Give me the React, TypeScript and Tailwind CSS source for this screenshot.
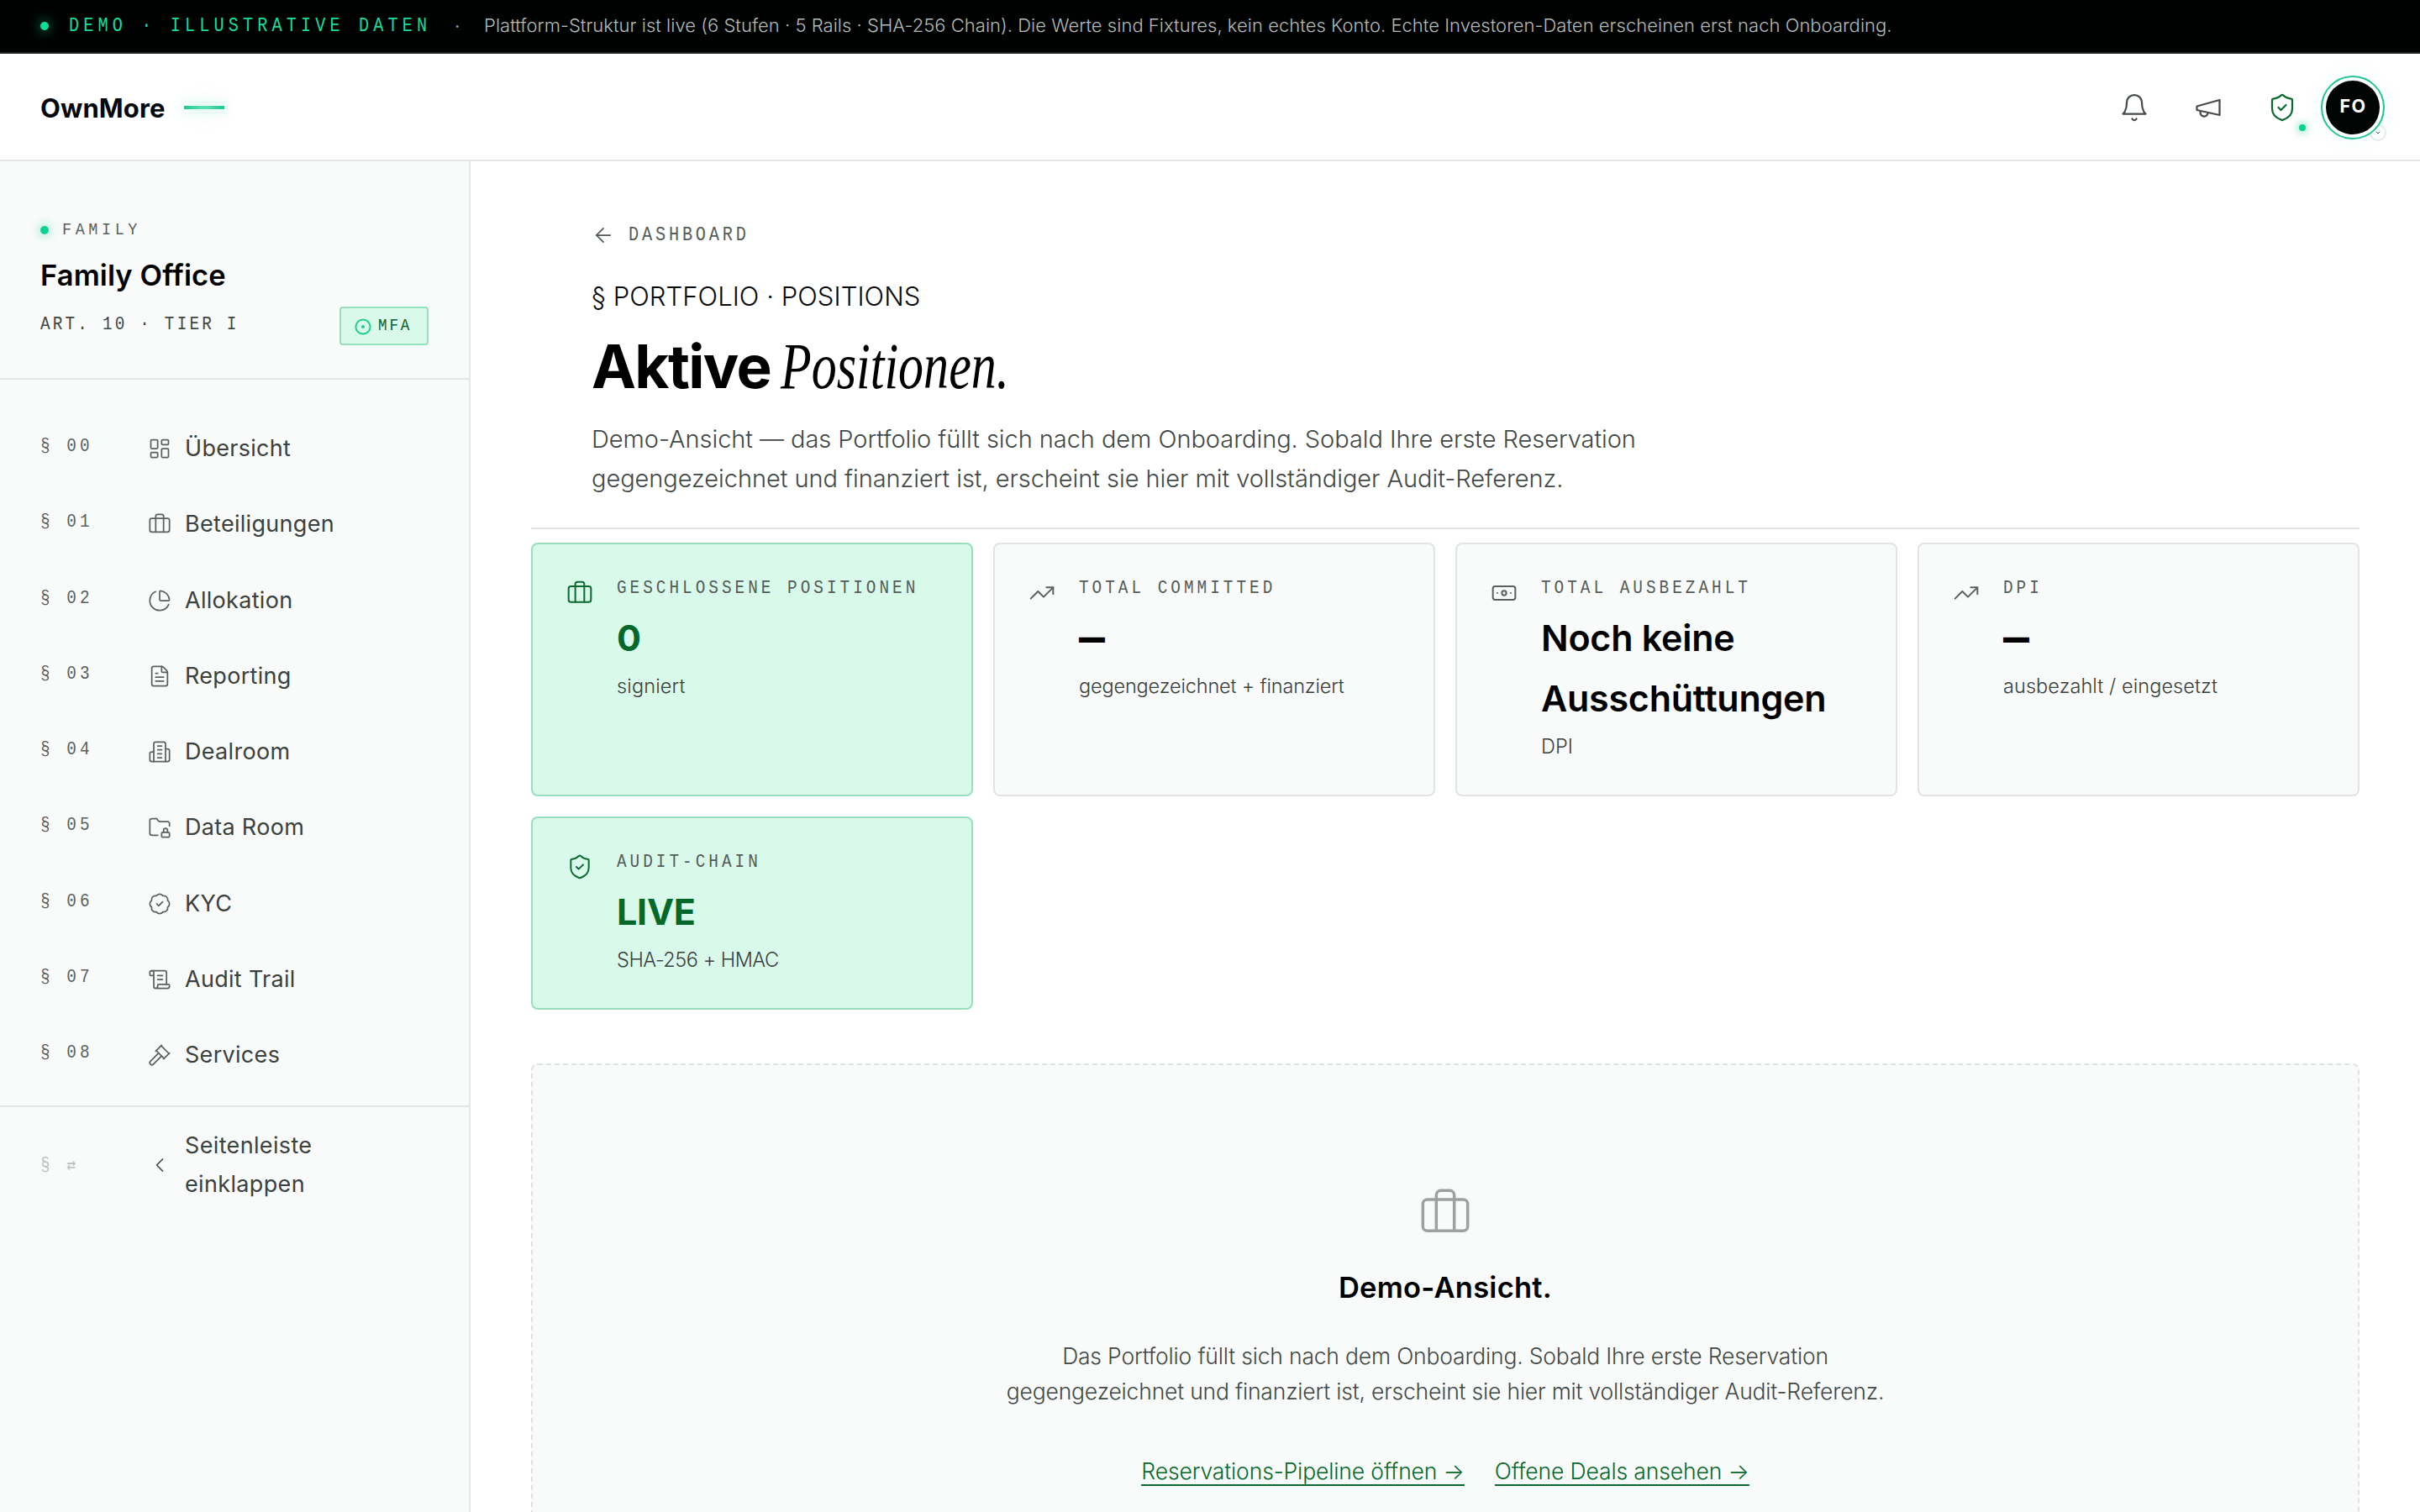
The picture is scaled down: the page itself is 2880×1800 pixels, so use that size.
import React from 'react';
import {
  ArrowLeft,
  BadgeCheck,
  Banknote,
  ChartPie,
  ChevronDown,
  ChevronLeft,
  FileText,
  FolderLock,
  Gavel,
  LayoutDashboard,
  ScrollText,
  ShieldCheck,
  TrendingUp,
} from 'lucide-react';

type IconProps = { className?: string; strokeWidth?: number };
type IconType = React.ComponentType<IconProps>;

function Glyph({ className, strokeWidth = 1.5, children }: IconProps & { children: React.ReactNode }) {
  return (
    <svg
      viewBox="0 0 24 24"
      fill="none"
      stroke="currentColor"
      strokeWidth={strokeWidth}
      strokeLinecap="round"
      strokeLinejoin="round"
      className={className}
    >
      {children}
    </svg>
  );
}

const BellIcon = (p: IconProps) => (
  <Glyph {...p}>
    <path d="M6 8a6 6 0 0 1 12 0c0 7 3 9 3 9H3s3-2 3-9" />
    <path d="M10.3 21a1.94 1.94 0 0 0 3.4 0" />
  </Glyph>
);

const MegaphoneIcon = (p: IconProps) => (
  <Glyph {...p}>
    <path d="m3 11 18-5v12L3 14v-3z" />
    <path d="M11.6 16.8a3 3 0 1 1-5.8-1.6" />
  </Glyph>
);

const BriefcaseIcon = (p: IconProps) => (
  <Glyph {...p}>
    <path d="M16 20V4a2 2 0 0 0-2-2h-4a2 2 0 0 0-2 2v16" />
    <rect width="20" height="14" x="2" y="6" rx="2" />
  </Glyph>
);

const BuildingIcon = (p: IconProps) => (
  <Glyph {...p}>
    <path d="M6 22V4a2 2 0 0 1 2-2h8a2 2 0 0 1 2 2v18Z" />
    <path d="M6 12H4a2 2 0 0 0-2 2v6a2 2 0 0 0 2 2h2" />
    <path d="M18 9h2a2 2 0 0 1 2 2v9a2 2 0 0 1-2 2h-2" />
    <path d="M10 6h4M10 10h4M10 14h4M10 18h4" />
  </Glyph>
);

/** Condensed monospace used for section numbers and small caps labels. */
function Mono({ className, children }: { className: string; children: React.ReactNode }) {
  return (
    <span
      className={`block origin-left scale-x-[0.88] font-['Liberation_Mono',monospace] whitespace-nowrap ${className}`}
    >
      {children}
    </span>
  );
}

const NAV: { no: string; label: string; icon: IconType }[] = [
  { no: '§ 00', label: 'Übersicht', icon: LayoutDashboard },
  { no: '§ 01', label: 'Beteiligungen', icon: BriefcaseIcon },
  { no: '§ 02', label: 'Allokation', icon: ChartPie },
  { no: '§ 03', label: 'Reporting', icon: FileText },
  { no: '§ 04', label: 'Dealroom', icon: BuildingIcon },
  { no: '§ 05', label: 'Data Room', icon: FolderLock },
  { no: '§ 06', label: 'KYC', icon: BadgeCheck },
  { no: '§ 07', label: 'Audit Trail', icon: ScrollText },
  { no: '§ 08', label: 'Services', icon: Gavel },
];

type Stat = { label: string; value: React.ReactNode; sub: string; subClass: string; icon: IconType; active?: boolean };

const EmptyValue = <span className="inline-block origin-left -translate-y-px scale-x-[0.72] scale-y-125 font-bold">—</span>;

const STATS: Stat[] = [
  { label: 'GESCHLOSSENE POSITIONEN', value: '0', sub: 'signiert', subClass: 'tracking-[0.15px]', icon: BriefcaseIcon, active: true },
  { label: 'TOTAL COMMITTED', value: EmptyValue, sub: 'gegengezeichnet + finanziert', subClass: 'tracking-[-0.16px]', icon: TrendingUp },
  { label: 'TOTAL AUSBEZAHLT', value: 'Noch keine Ausschüttungen', sub: 'DPI', subClass: 'tracking-normal', icon: Banknote },
  { label: 'DPI', value: EmptyValue, sub: 'ausbezahlt / eingesetzt', subClass: 'tracking-[0.07px]', icon: TrendingUp },
  { label: 'AUDIT-CHAIN', value: 'LIVE', sub: 'SHA-256 + HMAC', subClass: 'tracking-[-0.45px]', icon: ShieldCheck, active: true },
];

function Banner() {
  return (
    <div className="flex h-16 shrink-0 items-center border-b-2 border-[#222725] bg-[#000201] pl-12">
      <span className="size-[10px] rounded-full bg-[#10dc9a] shadow-[0_0_14px_2px_rgba(16,220,154,0.45)]" />
      <Mono className="-mr-[60px] ml-6 text-[23px] leading-none tracking-[5.8px] text-[#16dc9d]">
        DEMO · ILLUSTRATIVE DATEN
      </Mono>
      <span className="w-16 text-center text-[22px] leading-none text-[#8f9794]">·</span>
      <span className="pb-[2px] text-[22px] leading-none font-light tracking-[0.03px] text-[#b4bab7]">
        Plattform-Struktur ist live (6 Stufen · 5 Rails · SHA-256 Chain). Die Werte sind Fixtures, kein echtes Konto.
        Echte Investoren-Daten erscheinen erst nach Onboarding.
      </span>
    </div>
  );
}

function Header() {
  return (
    <header className="flex h-32 shrink-0 items-center border-b-2 border-[#e2e6e4] bg-white pt-[2px] pr-[42px] pl-12">
      <span className="text-[31px] leading-none font-bold tracking-[0.1px] text-[#05080c]">OwnMore</span>
      <span className="ml-[23px] h-1 w-12 bg-linear-to-r from-[#0fcb92] via-[#5fe0b4] to-[#0fcb92] shadow-[0_0_16px_rgba(16,210,150,0.45),0_0_48px_rgba(16,210,150,0.14)]" />
      <div className="ml-auto flex items-center">
        <span className="flex w-[88px] justify-center text-[#454c4a]">
          <BellIcon className="size-9" />
        </span>
        <span className="flex w-[88px] justify-center text-[#454c4a]">
          <MegaphoneIcon className="size-9" />
        </span>
        <span className="relative flex w-[88px] justify-center text-[#0a6a30]">
          <ShieldCheck className="size-9" strokeWidth={1.5} />
          <span className="absolute right-4 -bottom-[10px] size-2 rounded-full bg-[#12d08f] shadow-[0_0_10px_2px_rgba(16,210,150,0.5)]" />
        </span>
        <div className="relative ml-[2px] size-[76px]">
          <span className="absolute -right-[2px] -bottom-[2px] flex size-5 items-center justify-center rounded-full border-2 border-[#e8ebea] bg-white">
            <ChevronDown className="size-2 text-[#454c4a]" strokeWidth={3} />
          </span>
          <div className="relative flex size-[76px] items-center justify-center rounded-full border-2 border-[#22c595] bg-white shadow-[0_0_24px_rgba(16,210,150,0.06)]">
            <span className="flex size-16 items-center justify-center rounded-full bg-[#020403] pb-[3px] pl-[1px] text-[21.5px] leading-none font-bold tracking-[1.5px] text-white">
              FO
            </span>
          </div>
        </div>
      </div>
    </header>
  );
}

function Sidebar() {
  return (
    <aside className="w-[560px] shrink-0 border-r-2 border-[#e2e8e6] bg-[#f9fbfa]">
      <div className="border-b-2 border-[#e1e5e3] px-12 pt-[70px] pb-[39px]">
        <div className="flex h-6 items-center">
          <span className="size-[10px] rounded-full bg-[#10d195] shadow-[0_0_12px_2px_rgba(16,210,150,0.4)]" />
          <Mono className="ml-4 text-[21px] leading-6 tracking-[5.2px] text-[#59615e]">FAMILY</Mono>
        </div>
        <div className="mt-[18px] text-[34.5px] leading-[48px] font-semibold tracking-[0.1px] text-black">
          Family Office
        </div>
        <div className="mt-[13px] flex h-[46px] items-center justify-between">
          <Mono className="pb-[2px] text-[22px] leading-none tracking-[3.6px] text-[#3f4644]">ART. 10 · TIER I</Mono>
          <span className="flex h-[46px] w-[106px] items-center rounded border-2 border-[#98dfc0] bg-[#d9faea] pl-4">
            <svg viewBox="0 0 20 20" className="mt-[2px] size-5 shrink-0 text-[#20cd9a]" fill="none" stroke="currentColor">
              <circle cx="10" cy="10" r="8.6" strokeWidth="2" />
              <circle cx="10" cy="10" r="2" fill="currentColor" stroke="none" />
            </svg>
            <Mono className="ml-2 pb-px text-[20px] leading-none tracking-[3.2px] text-[#0a5e2b]">MFA</Mono>
          </span>
        </div>
      </div>
      <nav className="pt-[37px] pb-[15px]">
        {NAV.map(({ no, label, icon: Icon }) => (
          <a key={no} className="flex h-[90.25px] items-center pl-12">
            <Mono className="w-32 pb-1 text-[22px] leading-none tracking-[4.6px] text-[#59615e]">{no}</Mono>
            <Icon className="size-7 text-[#5a625f]" strokeWidth={1.5} />
            <span className="ml-4 pb-px text-[27px] leading-none tracking-[0.3px] text-[#3a413f]">{label}</span>
          </a>
        ))}
      </nav>
      <div className="flex items-center border-t-2 border-[#e1e5e3] pt-[23px] pl-12">
        <Mono className="w-32 text-[22px] leading-none tracking-[4.6px] text-[#b9c1be]">
          § <span className="font-['DejaVu_Sans_Mono',monospace] text-[20px]">⇄</span>
        </Mono>
        <ChevronLeft className="size-7 text-[#454c4a]" strokeWidth={1.5} />
        <span className="ml-4 w-[280px] text-[27px] leading-[46px] tracking-[0.35px] text-[#3a413f]">
          Seitenleiste einklappen
        </span>
      </div>
    </aside>
  );
}

function StatCard({ label, value, sub, subClass, icon: Icon, active }: Stat) {
  return (
    <div
      className={`flex rounded-lg border-2 px-10 pt-10 pb-[38px] ${
        active ? 'border-[#98dfc0] bg-[#d9faea]' : 'border-[#e0e5e3] bg-[#f9fbfa]'
      }`}
    >
      <Icon
        className={`mt-[2px] size-8 shrink-0 ${active ? 'text-[#0a6a30]' : 'text-[#59615e]'}`}
        strokeWidth={1.5}
      />
      <div className="ml-7 min-w-0">
        <Mono className="mt-px text-[22px] leading-6 tracking-[4.55px] text-[#545c59]">{label}</Mono>
        <div
          className={`mt-[10px] text-[43px] leading-[72px] tracking-[-0.25px] ${
            active ? 'font-bold text-[#04682b]' : 'font-semibold text-black'
          }`}
        >
          {value}
        </div>
        <div className={`mt-[3px] text-[23.5px] leading-[38px] font-light whitespace-nowrap text-[#39403e] ${subClass}`}>
          {sub}
        </div>
      </div>
    </div>
  );
}

function Main() {
  return (
    <main className="flex-1 bg-white px-[72px]">
      <div className="border-b-2 border-[#e1e5e3] pt-[74px] pb-[35px] pl-[72px]">
        <a className="flex h-7 items-center">
          <ArrowLeft className="size-7 text-[#4f5754]" strokeWidth={1.5} />
          <Mono className="ml-4 text-[23px] leading-none tracking-[4.35px] text-[#545c59]">DASHBOARD</Mono>
        </a>
        <div className="mt-[39px] text-[31px] leading-10 font-light tracking-[0.05px] text-[#07090c]">
          § PORTFOLIO · POSITIONS
        </div>
        <h1 className="mt-[23px] flex h-20 items-baseline text-[71px] leading-[80px] font-bold tracking-[-1.645px] text-black">
          Aktive
          <em className="ml-3 origin-left scale-x-[0.76] font-['Liberation_Serif',serif] text-[79px] leading-none font-normal tracking-normal italic">
            Positionen.
          </em>
        </h1>
        <p className="mt-6 max-w-[1290px] text-[29px] leading-[46.5px] font-light tracking-[-0.055px] text-[#414846]">
          Demo-Ansicht — das Portfolio füllt sich nach dem Onboarding. Sobald Ihre erste Reservation gegengezeichnet
          und finanziert ist, erscheint sie hier mit vollständiger Audit-Referenz.
        </p>
      </div>
      <div className="mt-4 grid grid-cols-4 gap-6">
        {STATS.map((s) => (
          <StatCard key={s.label} {...s} />
        ))}
      </div>
      <section className="mt-16 flex h-[640px] flex-col items-center rounded-lg border-2 border-dashed border-[#dfe4e2] bg-[#f9fbfa] pt-36 text-center">
        <BriefcaseIcon className="size-16 text-[#9da1a0]" strokeWidth={1.3} />
        <h2 className="mt-[33px] text-[34.5px] leading-[48px] font-semibold tracking-[0.25px] text-black">
          Demo-Ansicht.
        </h2>
        <p className="mt-9 w-[1090px] text-[26.5px] leading-[42px] font-light tracking-[-0.19px] text-[#414846]">
          Das Portfolio füllt sich nach dem Onboarding. Sobald Ihre erste Reservation gegengezeichnet und finanziert
          ist, erscheint sie hier mit vollständiger Audit-Referenz.
        </p>
        <div className="mt-[59px] flex gap-9 text-[26.5px] leading-[31px] font-light tracking-[-0.13px] text-[#04682b]">
          <a className="border-b-2 border-[#0a6a30]">Reservations-Pipeline öffnen →</a>
          <a className="border-b-2 border-[#0a6a30]">Offene Deals ansehen →</a>
        </div>
      </section>
    </main>
  );
}

export default function App() {
  return (
    <div className="flex h-[1800px] w-[2880px] flex-col overflow-hidden bg-white font-['Inter',sans-serif]">
      <Banner />
      <Header />
      <div className="flex min-h-0 flex-1">
        <Sidebar />
        <Main />
      </div>
    </div>
  );
}
